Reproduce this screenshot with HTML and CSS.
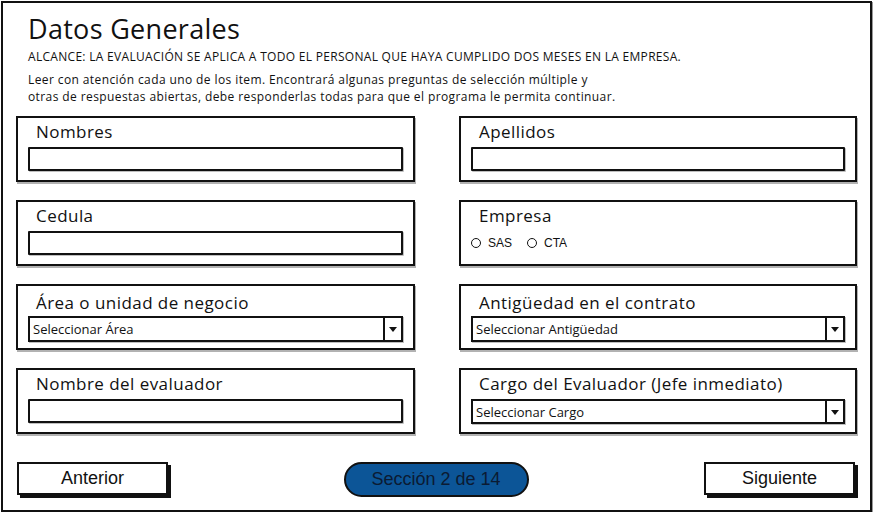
FILE: index.html
```html
<!DOCTYPE html>
<html lang="es">
<head>
    <meta charset="utf-8">
    <title>Datos Generales</title>
    <link rel="stylesheet" href="styles.css">
</head>
<body>
<div class="frame">
    <header class="intro">
        <h1>Datos Generales</h1>
        <p class="scope">ALCANCE: LA EVALUACIÓN SE APLICA A TODO EL PERSONAL QUE HAYA CUMPLIDO DOS MESES EN LA EMPRESA.</p>
        <p class="note">Leer con atención cada uno de los item. Encontrará algunas preguntas de selección múltiple y<br>otras de respuestas abiertas, debe responderlas todas para que el programa le permita continuar.</p>
    </header>

    <div class="fields">
        <div class="panel">
            <label>Nombres</label>
            <input type="text" class="field">
        </div>
        <div class="panel">
            <label>Apellidos</label>
            <input type="text" class="field">
        </div>
        <div class="panel">
            <label>Cedula</label>
            <input type="text" class="field">
        </div>
        <div class="panel">
            <label>Empresa</label>
            <div class="radios">
                <span class="radio"><i></i>SAS</span>
                <span class="radio"><i></i>CTA</span>
            </div>
        </div>
        <div class="panel panel-select">
            <label>Área o unidad de negocio</label>
            <div class="select"><span>Seleccionar Área</span><b class="arrow"></b></div>
        </div>
        <div class="panel panel-select">
            <label>Antigüedad en el contrato</label>
            <div class="select"><span>Seleccionar Antigüedad</span><b class="arrow"></b></div>
        </div>
        <div class="panel">
            <label>Nombre del evaluador</label>
            <input type="text" class="field">
        </div>
        <div class="panel">
            <label>Cargo del Evaluador (Jefe inmediato)</label>
            <div class="select"><span>Seleccionar Cargo</span><b class="arrow"></b></div>
        </div>
    </div>

    <div class="nav">
        <button class="btn">Anterior</button>
        <span class="pill">Sección 2 de 14</span>
        <button class="btn">Siguiente</button>
    </div>
</div>
</body>
</html>
```

FILE: styles.css
```css
html,body{
    margin: 0;
    padding: 0;
    background: #fff;
    color: #111;
    font-family: "Open Sans", Lato, sans-serif;
}

.frame{
    margin: 1px 0 0 1px;
    width: 871px;
    height: 511px;
    box-sizing: border-box;
    border: 2px solid #111;
    box-shadow: 1px 1px 0 #999;
    padding: 0 12px 0 13px;
}

.intro h1{
    margin: 10px 0 0 12px;
    font-size: 27px;
    line-height: 32px;
    font-weight: 400;
    letter-spacing: 0.3px;
}
.intro p{
    margin: 0 0 0 12px;
    font-size: 12px;
}
.intro .scope{
    margin-top: 4px;
    line-height: 16px;
    letter-spacing: 0.3px;
}
.intro .note{
    margin-top: 6px;
    line-height: 17px;
    letter-spacing: 0.4px;
}

.fields{
    display: grid;
    grid-template-columns: 399px 398px;
    grid-auto-rows: 66px;
    column-gap: 44px;
    row-gap: 18px;
    margin-top: 11px;
}

.panel{
    box-sizing: border-box;
    border: 2px solid #111;
    box-shadow: 1px 2px 0 rgba(0,0,0,0.3);
    padding: 4px 10px 0 10px;
}
.panel label{
    display: block;
    margin-left: 8px;
    font-size: 17px;
    line-height: 20px;
    letter-spacing: 0.45px;
}
.panel-select{
    padding-top: 7px;
}

.field{
    display: block;
    box-sizing: border-box;
    width: 100%;
    height: 24px;
    margin: 5px 0 0 0;
    border: 2px solid #111;
    border-radius: 1px;
    background: #fff;
    box-shadow: 1px 1px 0 rgba(0,0,0,0.25);
    outline: none;
}

.select{
    display: flex;
    align-items: center;
    box-sizing: border-box;
    height: 25px;
    margin-top: 5px;
    border: 2px solid #111;
    box-shadow: 1px 1px 0 rgba(0,0,0,0.25);
    font-size: 13px;
}
.panel-select .select{
    height: 26px;
    margin-top: 3px;
}
.select span{
    flex: 1;
    padding-left: 3px;
}
.select .arrow{
    position: relative;
    width: 16px;
    align-self: stretch;
    border-left: 2px solid #111;
}
.select .arrow::after{
    content: "";
    position: absolute;
    left: 4px;
    top: 50%;
    margin-top: -2px;
    border-left: 4px solid transparent;
    border-right: 4px solid transparent;
    border-top: 5px solid #111;
}

.radios{
    display: flex;
    gap: 15px;
    margin-top: 10px;
    font-family: "Liberation Sans", Arial, sans-serif;
    font-size: 12px;
}
.radio{
    display: flex;
    align-items: center;
    gap: 7px;
}
.radio i{
    width: 8px;
    height: 8px;
    border: 1.5px solid #111;
    border-radius: 50%;
}

.nav{
    display: flex;
    justify-content: space-between;
    align-items: flex-start;
    margin-top: 28px;
    padding: 0 3px 0 1px;
}
.btn{
    width: 151px;
    height: 33px;
    border: 2px solid #111;
    background: #fff;
    box-shadow: 3px 3px 0 #111;
    font-family: "Liberation Sans", Arial, sans-serif;
    font-size: 18px;
    color: #111;
    cursor: pointer;
}
.pill{
    box-sizing: border-box;
    width: 185px;
    height: 35px;
    display: flex;
    align-items: center;
    justify-content: center;
    background: #0c5597;
    border: 2px solid #111;
    border-radius: 18px;
    font-family: "Liberation Sans", Arial, sans-serif;
    font-size: 18px;
    color: #0b1b33;
}
```
